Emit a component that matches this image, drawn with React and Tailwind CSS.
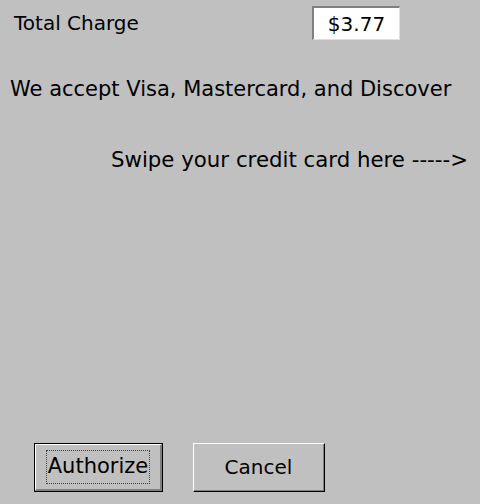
export default function App() {
  return (
    <div
      className="flex flex-col w-[480px] h-[504px] bg-[#c0c0c0] text-black overflow-hidden"
      style={{ fontFamily: '"DejaVu Sans", Tahoma, sans-serif' }}
    >
      {/* Total row */}
      <div className="flex items-start pt-[6px]">
        <div className="ml-[14px] mt-[5px] text-[20px] leading-[24px]">Total Charge</div>
        <div className="ml-auto mr-[80px] w-[88px] h-[34px] bg-white border-t-2 border-l-2 border-t-[#808080] border-l-[#808080] border-b border-r border-b-[#dfdfdf] border-r-[#dfdfdf] flex items-center justify-center text-[20px]">
          $3.77
        </div>
      </div>

      <p className="ml-[10px] mt-[37px] text-[21px] leading-[24px]">
        We accept Visa, Mastercard, and Discover
      </p>

      <p className="mt-[47px] mr-[12px] text-right text-[21.3px] leading-[24px]">
        Swipe your credit card here -----&gt;
      </p>

      <div className="flex-1" />

      {/* Buttons */}
      <div className="flex gap-[30px] ml-[34px] mb-[12px]">
        <button className="w-[129px] h-[49px] border border-black bg-[#c0c0c0]">
          <div className="w-full h-full border-t border-l border-t-white border-l-white border-b-2 border-r-2 border-b-[#808080] border-r-[#808080] flex items-center justify-center text-[21px]">
            <span className="outline outline-1 outline-dotted outline-[#404040] px-[1px]">Authorize</span>
          </div>
        </button>
        <button className="w-[132px] h-[49px] bg-[#c0c0c0] border-t border-l border-t-white border-l-white border-b border-r border-b-black border-r-black">
          <div className="w-full h-full border-b border-r border-b-[#808080] border-r-[#808080] flex items-center justify-center text-[20px]">
            Cancel
          </div>
        </button>
      </div>
    </div>
  );
}
